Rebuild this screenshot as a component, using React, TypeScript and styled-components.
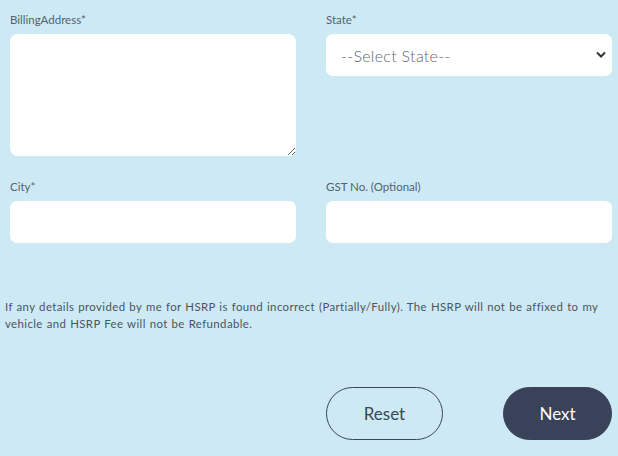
import styled, { createGlobalStyle } from "styled-components";

const GlobalStyle = createGlobalStyle`
	html, body {
		margin: 0;
		padding: 0;
		background: #cdeaf4;
	}
	body {
		font-family: Lato, "Noto Sans", sans-serif;
		color: #4b5566;
	}
`;

const Page = styled.main`
	width: 618px;
	height: 456px;
	box-sizing: border-box;
	padding: 13px 6px 0 5px;
	background: #cdeaf4;
`;

const FieldGrid = styled.section`
	display: grid;
	grid-template-columns: 286px 286px;
	column-gap: 30px;
	row-gap: 24px;
	margin-left: 5px;
`;

const Field = styled.div`
	display: flex;
	flex-flow: column nowrap;
	gap: 7px;
`;

const Label = styled.label`
	font-size: 11.5px;
	line-height: 14px;
	color: #56606e;
`;

const TextArea = styled.textarea`
	box-sizing: border-box;
	height: 122px;
	border: none;
	border-radius: 8px;
	background: #fff;
	resize: vertical;
	outline: none;
	font: inherit;
`;

const Input = styled.input`
	box-sizing: border-box;
	height: 42px;
	border: none;
	border-radius: 7px;
	background: #fff;
	outline: none;
	padding: 0 14px;
	font: inherit;
`;

const SelectBox = styled.div`
	position: relative;
	display: flex;
	align-items: center;
	box-sizing: border-box;
	height: 42px;
	border-radius: 7px;
	background: #fff;
	padding: 0 15px;
	font-size: 16px;
	font-weight: 300;
	color: #62676e;
	letter-spacing: .3px;
`;

const Chevron = styled.svg`
	position: absolute;
	right: 6px;
	top: 17px;
`;

const Notice = styled.p`
	max-width: 605px;
	margin: 55px 0 0;
	font-size: 11.4px;
	line-height: 17px;
	letter-spacing: .4px;
	word-spacing: .6px;
	color: #4a545e;
`;

const Actions = styled.div`
	display: grid;
	grid-template-columns: 286px 286px;
	column-gap: 30px;
	margin: 55px 0 0 5px;
`;

const ButtonRow = styled.div`
	grid-column: 2;
	display: flex;
	justify-content: space-between;
`;

const Button = styled.button<{ $primary?: boolean }>`
	height: 53px;
	width: ${p => (p.$primary ? "109px" : "117px")};
	border-radius: 27px;
	border: 1px solid ${p => (p.$primary ? "#394259" : "#3b4656")};
	background: ${p => (p.$primary ? "#394259" : "transparent")};
	color: ${p => (p.$primary ? "#fff" : "#3c4655")};
	font-family: Lato, "Noto Sans", sans-serif;
	font-size: 17px;
	cursor: pointer;
`;

export default function App() {
	return (
		<>
			<GlobalStyle />
			<Page>
				<FieldGrid>
					<Field>
						<Label>BillingAddress*</Label>
						<TextArea />
					</Field>
					<Field>
						<Label>State*</Label>
						<SelectBox>
							--Select State--
							<Chevron width="10" height="7" viewBox="0 0 10 7">
								<path d="M1 1.5 L5 5.5 L9 1.5" fill="none" stroke="#333" strokeWidth="2" />
							</Chevron>
						</SelectBox>
					</Field>
					<Field>
						<Label>City*</Label>
						<Input />
					</Field>
					<Field>
						<Label>GST No. (Optional)</Label>
						<Input />
					</Field>
				</FieldGrid>
				<Notice>
					If any details provided by me for HSRP is found incorrect (Partially/Fully). The HSRP will not be affixed to my
					vehicle and HSRP Fee will not be Refundable.
				</Notice>
				<Actions>
					<ButtonRow>
						<Button>Reset</Button>
						<Button $primary>Next</Button>
					</ButtonRow>
				</Actions>
			</Page>
		</>
	);
}
